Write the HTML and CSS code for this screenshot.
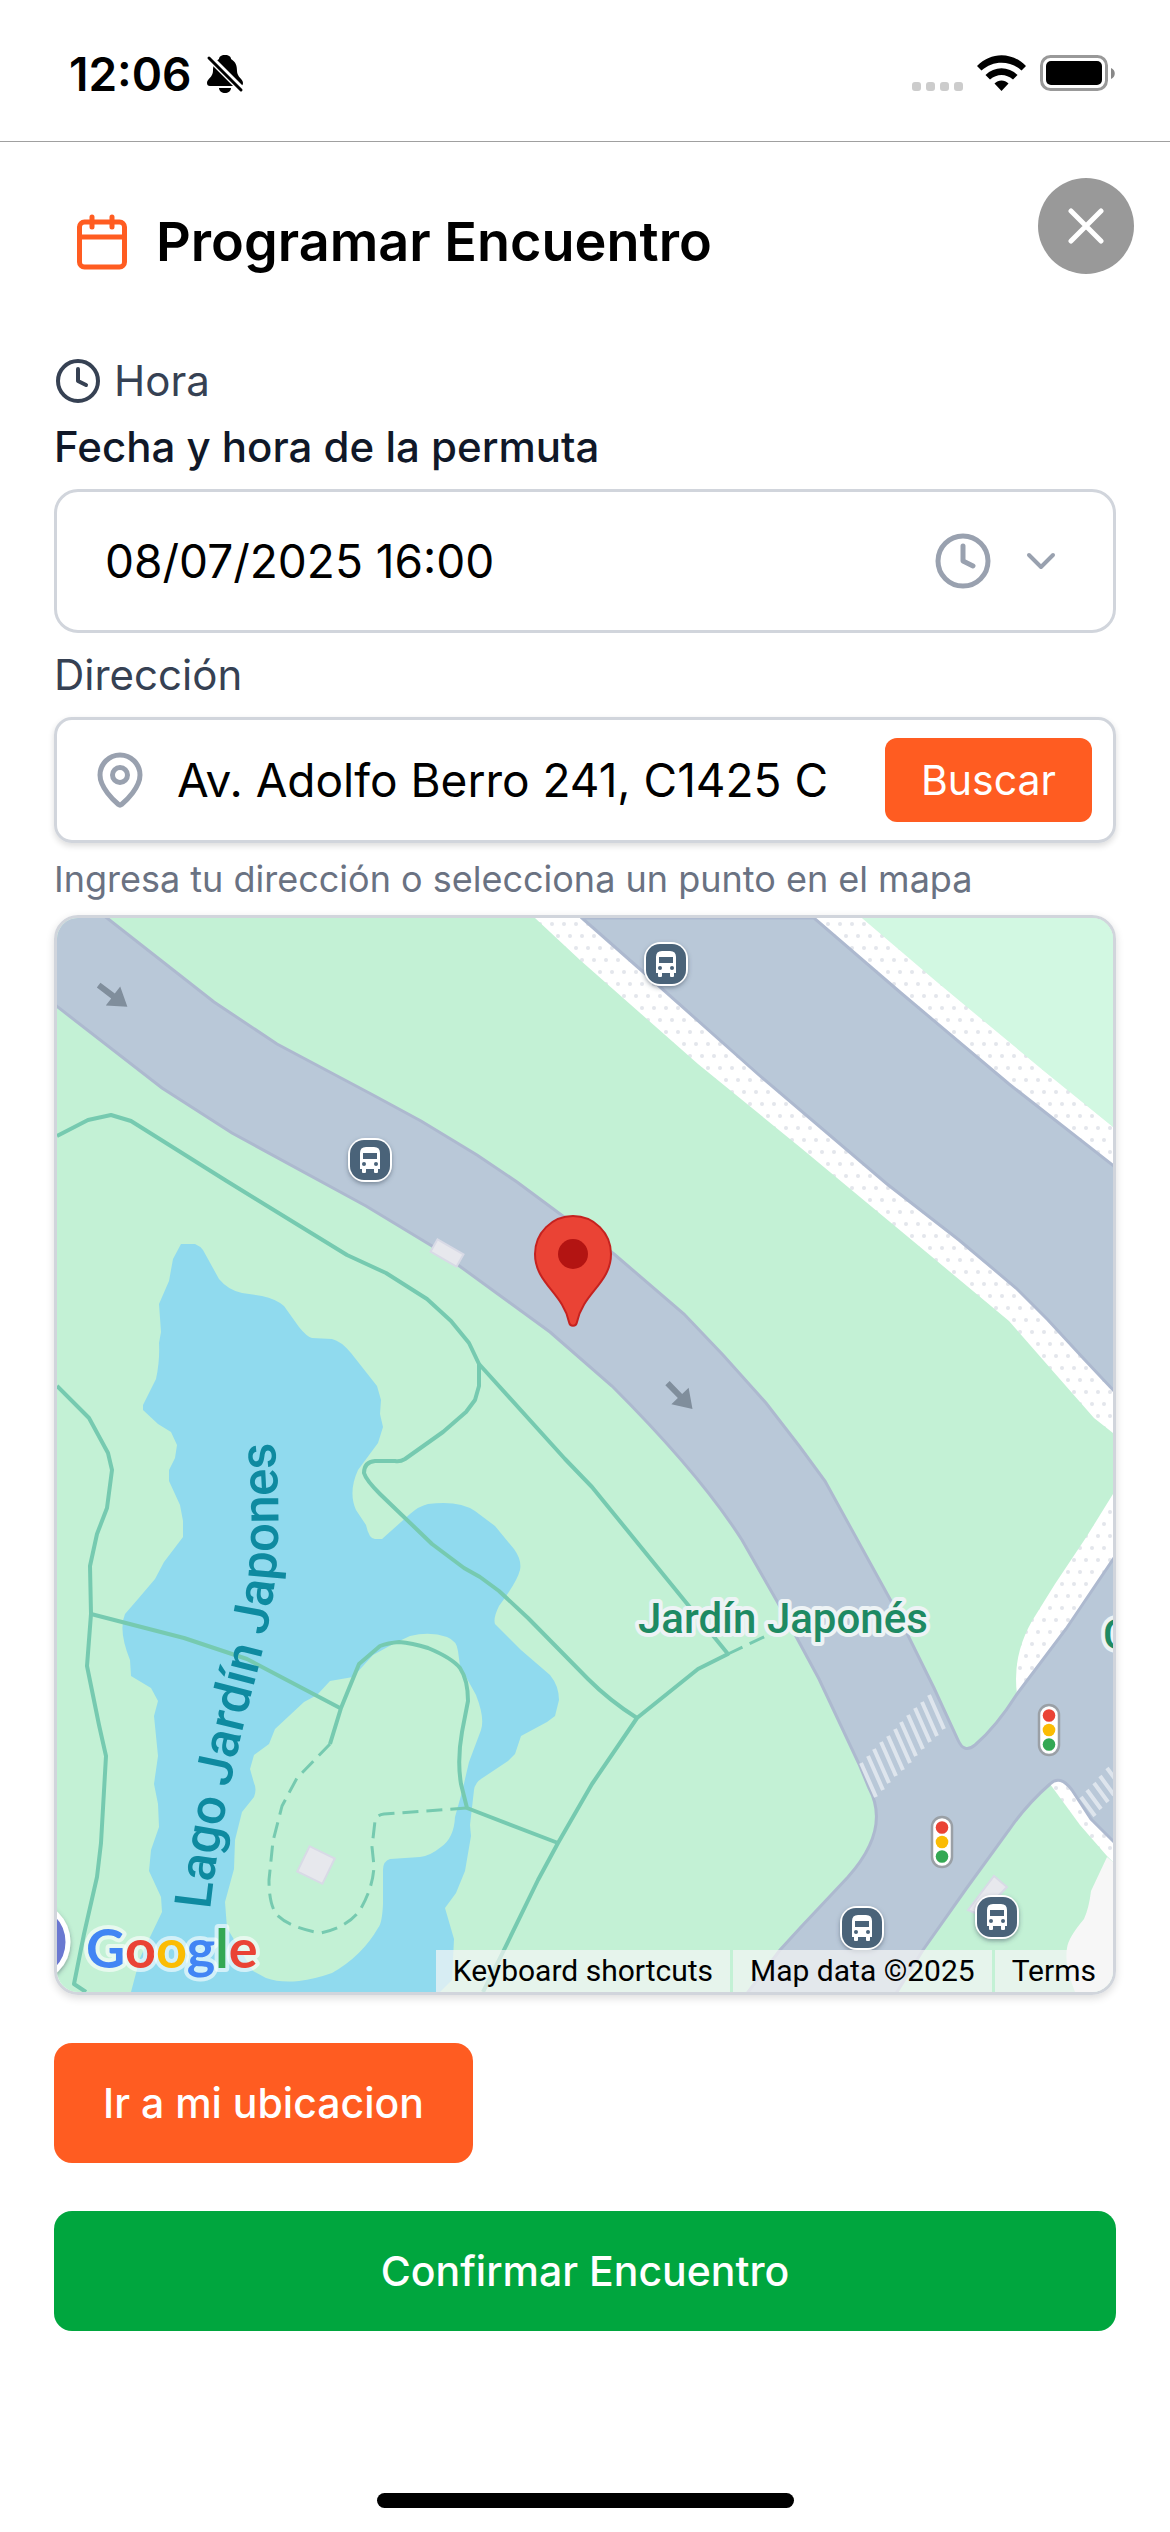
FILE: index.html
```html
<!DOCTYPE html>
<html lang="es">
<head>
  <meta charset="UTF-8" />
  <meta name="viewport" content="width=device-width, initial-scale=1.0" />
  <title>Programar Encuentro</title>
  <link rel="stylesheet" href="styles.css">
</head>
<body>

  <!-- Status bar -->
  <div class="status-bar">
    <div class="status-group">
      <span class="status-time">12:06</span>
      <svg class="status-bell" viewBox="0 0 38 40" aria-hidden="true">
        <path d="M19 1c-4 0-6 2-6 4C8 8 7 12 7 17c0 6-6 8-6 12 0 2 1 3 3 3h30c2 0 3-1 3-3 0-4-6-6-6-12 0-5-1-9-6-12 0-2-2-4-6-4z" />
        <path d="M13 34h12c0 3-3 5-6 5s-6-2-6-5z" />
        <path d="M3 3l33 33" stroke="#fff" stroke-width="7" />
        <path d="M3 4l32 32" stroke="#000" stroke-width="3" stroke-linecap="round" />
      </svg>
    </div>
    <div class="status-group">
      <svg class="status-signal" viewBox="0 0 51 37" aria-hidden="true">
        <rect x="0" y="27" width="9" height="9" rx="3" />
        <rect x="14" y="27" width="9" height="9" rx="3" />
        <rect x="28" y="27" width="9" height="9" rx="3" />
        <rect x="42" y="27" width="9" height="9" rx="3" />
      </svg>
      <svg class="status-wifi" viewBox="0 0 49 37" aria-hidden="true">
        <path d="M0 11C14-3.500 35-3.500 49 11l-4.500 4.500C33 5 16 5 4.500 15.500z" />
        <path d="M8.500 20c9-9 23-9 32 0L36 24.500c-7-6-16-6-23 0z" />
        <path d="M17.500 28.500c4-4 10-4 14 0l-7 7.500z" />
      </svg>
      <svg class="status-battery" viewBox="0 0 76 37" aria-hidden="true">
        <rect x="1.500" y="1.500" width="65" height="33" rx="9" fill="none" stroke="#999" stroke-width="3" />
        <rect x="6" y="6" width="56" height="24" rx="5" />
        <path d="M71 13c5 2 5 9 0 11z" fill="#888" />
      </svg>
    </div>
  </div>

  <header class="modal-header">
    <div class="modal-title">
      <svg class="icon icon-lg icon-accent" viewBox="0 0 24 24" aria-hidden="true">
        <path d="M8 2v4M16 2v4M3 10h18" />
        <rect x="3" y="4" width="18" height="18" rx="2" />
      </svg>
      <h1>Programar Encuentro</h1>
    </div>
    <button class="close-btn" type="button" aria-label="Cerrar">
      <svg viewBox="0 0 36 36" aria-hidden="true"><path d="M3 3l30 30M33 3L3 33" /></svg>
    </button>
  </header>

  <form class="meeting-form">
    <div class="section-label">
      <svg class="icon icon-md" viewBox="0 0 24 24" aria-hidden="true">
        <circle cx="12" cy="12" r="10" />
        <path d="M12 6v6l4 2" />
      </svg>
      <span>Hora</span>
    </div>

    <label class="field-label strong" for="fecha">Fecha y hora de la permuta</label>
    <div class="field date-field">
      <input id="fecha" type="text" value="08/07/2025 16:00">
      <svg class="icon icon-lg" viewBox="0 0 24 24" aria-hidden="true">
        <circle cx="12" cy="12" r="10" />
        <path d="M12 6v6l4 2" />
      </svg>
      <svg class="icon icon-md" viewBox="0 0 24 24" aria-hidden="true"><path d="M6 9l6 6 6-6" /></svg>
    </div>

    <label class="field-label" for="direccion">Dirección</label>
    <div class="field search-field">
      <svg class="icon icon-lg" viewBox="0 0 24 24" aria-hidden="true">
        <path d="M20 10c0 5-5.500 10.200-7.400 11.800a1 1 0 0 1-1.200 0C9.500 20.200 4 15 4 10a8 8 0 0 1 16 0" />
        <circle cx="12" cy="10" r="3" />
      </svg>
      <input id="direccion" type="text" value="Av. Adolfo Berro 241, C1425 C">
      <button class="search-btn" type="button">Buscar</button>
    </div>
    <p class="hint">Ingresa tu dirección o selecciona un punto en el mapa</p>

    <div class="map">
      <svg class="map-canvas" viewBox="57 918 1056 1074" preserveAspectRatio="xMidYMid slice" role="img" aria-label="Mapa">
        <defs>
          <pattern id="dots" width="12" height="24" patternUnits="userSpaceOnUse" x="588" y="930">
            <rect width="12" height="24" fill="#fff" />
            <circle cx="6" cy="6" r="2" fill="#e3e6ec" />
            <circle cx="0" cy="18" r="2" fill="#e3e6ec" />
            <circle cx="12" cy="18" r="2" fill="#e3e6ec" />
          </pattern>
          <filter id="shadow" x="-30%" y="-30%" width="160%" height="160%">
            <feDropShadow dx="0" dy="2" stdDeviation="2" flood-color="#3c4a5c" flood-opacity="0.5" />
          </filter>
          <path id="lake-line" d="M210 1910C218 1835 236 1750 258 1669C276 1600 285 1530 273 1430" />
          <g id="bus">
            <rect x="-22" y="-22" width="44" height="44" rx="17" fill="#fff" filter="url(#shadow)" />
            <rect x="-20" y="-20" width="40" height="40" rx="14" fill="#4a6379" />
            <path d="M-10-7q0-6 6-6h8q6 0 6 6V9H8v3q0 1-1 1H5q-1 0-1-1V9h-8v3q0 1-1 1h-2q-1 0-1-1V9h-2z" fill="#fff" />
            <rect x="-7" y="-7" width="14" height="6" fill="#4a6379" />
            <circle cx="-6" cy="4" r="2" fill="#4a6379" />
            <circle cx="6" cy="4" r="2" fill="#4a6379" />
          </g>
          <g id="traffic-light">
            <rect x="-10" y="-25" width="20" height="50" rx="10" fill="#fff" stroke="#9aa0a6" stroke-width="2.500" />
            <circle cy="-14.500" r="6.300" fill="#ea4335" />
            <circle r="6.300" fill="#fbbc04" />
            <circle cy="14.500" r="6.300" fill="#34a853" />
          </g>
          <path id="arrow" d="M-18-3h18v-9L18 0 0 12V3h-18z" fill="#808e9c" />
        </defs>

        <rect x="57" y="918" width="1056" height="1074" fill="#c3f1d5" />

        <!-- Avenue in the corner, with its paved borders -->
        <path d="M862 918L937 982L1044 1071L1113 1127V918z" fill="#d2f8e2" />
        <path d="M535 918L580 960L698 1064L801 1148L937 1261L1009 1321L1044 1361L1094 1418L1113 1433V1127L1044 1071L937 982L862 918z" fill="url(#dots)" />
        <path class="road" d="M582 918L641 970L759 1075L887 1184L959 1240L1016 1288L1048 1320L1084 1359L1115 1392V1167L1009 1084L901 993L814 918z" />
        <path d="M1113 1494L1087 1536L1055 1584L1032 1621Q1012 1656 1017 1694L1113 1590z" fill="url(#dots)" />
        <path d="M1050 1784L1080 1825L1107 1856L1113 1862V1800L1060 1776z" fill="url(#dots)" />
        <path d="M1107 1857L1091 1891Q1089 1908 1084 1919Q1068 1938 1067 1948Q1064 1964 1075 1992H1113V1862z" fill="#f7f7f7" />

        <!-- Lake -->
        <path d="M181 1244H195Q200 1246 203 1250L219 1279Q228 1290 242 1293L262 1296Q276 1299 284 1306L299 1327Q307 1337 312 1338L332 1339Q341 1341 351 1353L377 1386L381 1400L380 1414L383 1427L378 1443L358 1470Q348 1492 356 1510L366 1525Q369 1539 375 1539H382L410 1514Q419 1506 428 1504Q459 1500 475 1511L495 1526L514 1549Q522 1560 520 1570Q517 1582 499 1606Q493 1618 495 1624L521 1650L550 1675Q559 1686 559 1700L555 1716L547 1722L521 1736L515 1754L508 1761L484 1777Q475 1782 474 1790L470 1825L471 1836L465 1871L456 1893L445 1908L454 1939L452 1980L440 1992H131L140 1958L162 1912L161 1897L149 1871L151 1850L159 1827L158 1804L154 1784L158 1756L154 1716L158 1701L151 1688L131 1676L130 1660Q118 1630 125 1614L138 1599L155 1579L164 1562L183 1537V1521L180 1505L169 1481V1470L175 1458L177 1445L171 1432L158 1424L143 1410V1405L156 1379Q160 1360 159 1343L161 1332L159 1304L169 1281L173 1259z" fill="#90daee" />
        <path d="M410 1636Q430 1631 447 1637Q457 1641 458 1651L460 1666L476 1695Q485 1718 481 1730L469 1762L462 1792L455 1817Q454 1838 441 1847Q430 1856 420 1857L390 1859Q383 1861 383 1870V1904Q382 1924 378 1928Q362 1956 332 1973Q315 1979 299 1981Q280 1983 266 1978L253 1971L227 1928L225 1902L234 1869L235 1840L242 1812L254 1797Q257 1789 254 1783L250 1769L254 1755L269 1744L275 1729L304 1702L317 1695L330 1681L353 1677L373 1655L395 1643z" fill="#c3f1d5" />

        <!-- Footpaths -->
        <g class="footpath">
          <path d="M57 1136L88 1120L111 1115L131 1121L225 1180L347 1255L386 1273L427 1299L451 1321L469 1343L479 1364V1386L475 1400L466 1412L443 1432L405 1459Q400 1462 395 1461H375Q364 1462 364 1473Q366 1480 380 1494L432 1544L464 1568L480 1577L499 1591L528 1618L588 1679Q610 1701 637 1718" />
          <path d="M479 1364L565 1459L592 1487L728 1654L698 1669L637 1718L592 1784L558 1843L538 1880L502 1954L483 1992" />
          <path d="M558 1843L467 1808L461 1784Q457 1760 462 1732L468 1701Q468 1680 460 1668Q452 1658 428 1648Q412 1643 399 1642Q388 1643 380 1646L359 1664L341 1708L330 1744" />
          <path d="M91 1614L184 1638L247 1659L340 1708" />
          <path d="M57 1386L89 1418L108 1453L112 1470L107 1508L97 1534L90 1566L91 1614L87 1666L99 1725L106 1756L101 1843L97 1877L84 1934L74 1984L86 1992" />
        </g>
        <g class="footpath dashed">
          <path d="M330 1744L297 1778L282 1806L273 1841L269 1880Q269 1905 277 1915Q290 1928 321 1933Q348 1927 360 1910Q373 1888 374 1866L372 1847L375 1821Q376 1815 384 1814L467 1808" />
          <path d="M728 1654L768 1635" />
        </g>

        <!-- Main road -->
        <path class="road" d="M50 876L107 918L214 1002L277 1044L373 1095L421 1121L477 1155L517 1182L614 1254L684 1314L723 1355L766 1403L800 1447L825 1481L891 1601L934 1688L958 1740Q964 1754 975 1745Q996 1727 1017 1694L1066 1629L1120 1549V1848L1091 1819L1072 1790Q1060 1774 1050 1784Q1026 1805 1009 1830L966 1889L923 1950L892 2000H742L780 1950L801 1927L848 1877Q891 1829 869 1788L859 1764L819 1679L778 1603L742 1540Q700 1474 612 1386L550 1332L432 1246L366 1206L232 1133L162 1088L50 1001z" />
        <path class="crosswalk" d="M861 1763l15 34M868 1756l15 34M874 1749l15 34M881 1742l15 34M888 1736l15 34M895 1729l15 34M901 1722l15 34M908 1715l15 34M915 1708l15 34M922 1702l15 34M929 1695l15 34" />
        <path class="crosswalk" d="M1081 1797l14 19M1087 1790l14 19M1094 1783l14 19M1100 1776l14 19M1107 1768l14 19" />

        <!-- Buildings -->
        <rect class="building" x="432" y="1246" width="30" height="14" transform="rotate(30 447 1253)" />
        <rect class="building" x="302" y="1851" width="28" height="28" transform="rotate(26 316 1865)" />
        <path class="building" d="M994 1876L1007 1887L980 1915L968 1910z" />

        <use href="#arrow" transform="translate(113 996) rotate(37)" />
        <use href="#arrow" transform="translate(680 1396) rotate(46)" />

        <!-- Labels -->
        <text class="lake-label"><textPath href="#lake-line">Lago</textPath></text>
        <text class="lake-label"><textPath href="#lake-line" startOffset="124">Jardín</textPath></text>
        <text class="lake-label"><textPath href="#lake-line" startOffset="280">Japones</textPath></text>
        <text class="park-label" x="638" y="1633">Jardín Japonés</text>
        <text class="park-label" x="1103" y="1649">C</text>

        <use href="#bus" x="666" y="964" />
        <use href="#bus" x="370" y="1160" />
        <use href="#bus" x="862" y="1928" />
        <use href="#bus" x="997" y="1917" />
        <use href="#traffic-light" x="1049" y="1730" />
        <use href="#traffic-light" x="942" y="1842" />
        <circle cx="29" cy="1942" r="39" fill="#6b78d1" stroke="#fff" stroke-width="5" filter="url(#shadow)" />

        <!-- Selected point -->
        <path d="M573 1216c-21 0-38 17-38 38 0 29 28 39 34 68 1 5 7 5 8 0 6-29 34-39 34-68 0-21-17-38-38-38z" fill="#ea4335" stroke="#c5221f" stroke-width="2" />
        <circle cx="573" cy="1254" r="15" fill="#b31412" />

        <text class="map-logo" x="86" y="1968"><tspan fill="#4285f4">G</tspan><tspan fill="#ea4335">o</tspan><tspan fill="#fbbc04">o</tspan><tspan fill="#4285f4">g</tspan><tspan fill="#34a853">l</tspan><tspan fill="#ea4335">e</tspan></text>
      </svg>
      <div class="map-credits">
        <button type="button">Keyboard shortcuts</button>
        <span>Map data ©2025</span>
        <a href="#">Terms</a>
      </div>
    </div>

    <button class="btn btn-location" type="button">Ir a mi ubicacion</button>
    <button class="btn btn-confirm" type="submit">Confirmar Encuentro</button>
  </form>

  <div class="home-indicator"></div>

</body>
</html>
```
FILE: styles.css
```css
:root {
  --accent: #ff5c21;
  --confirm: #00a63e;
  --border: #d1d5dc;
  --label: #364153;
  --strong: #101828;
  --muted: #6a7282;
  --icon: #99a1af;
}

* {
  box-sizing: border-box;
  margin: 0;
  padding: 0;
}

body {
  display: flex;
  flex-direction: column;
  min-height: 100vh;
  background: #fff;
  color: #000;
  font-family: Inter, "Liberation Sans", sans-serif;
}

button,
input {
  border: none;
  background: none;
  font-family: inherit;
  color: inherit;
}

button {
  cursor: pointer;
}

svg {
  display: block;
  flex-shrink: 0;
}

/* Status bar */
.status-bar {
  display: flex;
  justify-content: space-between;
  align-items: center;
  height: 142px;
  padding: 6px 54px 0 69px;
  border-bottom: 1px solid #a0a0a0;
}

.status-group {
  display: flex;
  align-items: center;
  gap: 14px;
}

.status-time {
  font-size: 46px;
  font-weight: 600;
}

.status-bell {
  width: 38px;
  height: 40px;
}

.status-signal {
  width: 51px;
  height: 37px;
  fill: #ccc;
}

.status-wifi {
  width: 49px;
  height: 37px;
}

.status-battery {
  width: 76px;
  height: 37px;
}

/* Icons */
.icon {
  fill: none;
  stroke: currentColor;
  stroke-width: 2;
  stroke-linecap: round;
  stroke-linejoin: round;
}

.icon-md {
  width: 48px;
  height: 48px;
}

.icon-lg {
  width: 60px;
  height: 60px;
}

.icon-accent {
  color: var(--accent);
}

/* Header */
.modal-header {
  display: flex;
  justify-content: space-between;
  align-items: flex-start;
  padding: 36px 36px 0 72px;
}

.modal-title {
  display: flex;
  align-items: center;
  gap: 24px;
  padding-top: 34px;
}

.modal-title h1 {
  font-size: 54px;
  font-weight: 600;
  line-height: 60px;
}

.close-btn {
  display: flex;
  justify-content: center;
  align-items: center;
  width: 96px;
  height: 96px;
  border-radius: 50%;
  background: #999;
}

.close-btn svg {
  width: 36px;
  height: 36px;
  stroke: #fff;
  stroke-width: 5;
  stroke-linecap: round;
}

/* Form */
.meeting-form {
  display: flex;
  flex-direction: column;
  gap: 12px;
  padding: 77px 54px 48px;
}

.section-label {
  display: flex;
  align-items: center;
  gap: 12px;
  margin-bottom: -6px;
  color: var(--label);
  font-size: 42px;
  line-height: 60px;
}

.field-label {
  color: var(--label);
  font-size: 42px;
  line-height: 60px;
}

.field-label.strong {
  color: var(--strong);
  font-weight: 500;
}

.field {
  display: flex;
  align-items: center;
  gap: 24px;
  border: 3px solid var(--border);
  border-radius: 24px;
  color: var(--icon);
}

.field input {
  flex: 1;
  min-width: 0;
  color: #000;
  font-size: 46px;
  line-height: 60px;
  outline: none;
}

.date-field {
  height: 144px;
  padding: 0 48px;
}

.search-field {
  height: 126px;
  padding: 0 21px 0 33px;
  border-radius: 18px;
  box-shadow: 0 3px 6px rgba(0, 0, 0, 0.14);
}

.search-field input {
  padding-left: 3px;
}

.search-btn {
  height: 84px;
  padding: 0 36px;
  border-radius: 12px;
  background: var(--accent);
  color: #fff;
  font-size: 41px;
}

.hint {
  color: var(--muted);
  font-size: 36px;
  line-height: 48px;
}

/* Map */
.map {
  position: relative;
  height: 1080px;
  border: 3px solid var(--border);
  border-radius: 24px;
  box-shadow: 0 3px 8px rgba(0, 0, 0, 0.14);
  overflow: hidden;
}

.map-canvas {
  width: 100%;
  height: 100%;
}

.road {
  fill: #b9c8d8;
  stroke: #adb9cf;
  stroke-width: 3;
}

.footpath {
  fill: none;
  stroke: #76cab0;
  stroke-width: 4;
  stroke-linejoin: round;
}

.footpath.dashed {
  stroke-width: 3;
  stroke-dasharray: 16 8;
}

.building {
  fill: #e7e8ed;
  stroke: #d8dae6;
  stroke-width: 2;
}

.crosswalk {
  fill: none;
  stroke: #dee5ed;
  stroke-width: 4;
}

.lake-label,
.park-label {
  font-family: Roboto, sans-serif;
  font-size: 51px;
  font-weight: 500;
  fill: #0e8aa0;
}

.park-label {
  font-size: 42px;
  fill: #1e8a63;
  stroke: #edf3f5;
  stroke-width: 8;
  stroke-linejoin: round;
  paint-order: stroke;
}

.map-logo {
  font-family: Lato, sans-serif;
  font-size: 54px;
  font-weight: 700;
  stroke: rgba(255, 255, 255, 0.6);
  stroke-width: 8;
  stroke-linejoin: round;
  paint-order: stroke;
}

.map-credits {
  position: absolute;
  right: 0;
  bottom: 0;
  display: flex;
  gap: 3px;
}

.map-credits > * {
  height: 42px;
  padding: 0 17px;
  background: rgba(245, 245, 245, 0.7);
  color: #000;
  font-family: Roboto, sans-serif;
  font-size: 30px;
  line-height: 42px;
  text-decoration: none;
}

/* Actions */
.btn {
  height: 120px;
  margin-top: 36px;
  padding: 0 49px;
  border-radius: 18px;
  color: #fff;
  font-size: 41px;
  font-weight: 500;
}

.btn-location {
  align-self: flex-start;
  background: var(--accent);
}

.btn-confirm {
  background: var(--confirm);
}

.home-indicator {
  width: 417px;
  max-width: 60%;
  height: 15px;
  margin: auto auto 24px;
  border-radius: 8px;
  background: #000;
}
```
